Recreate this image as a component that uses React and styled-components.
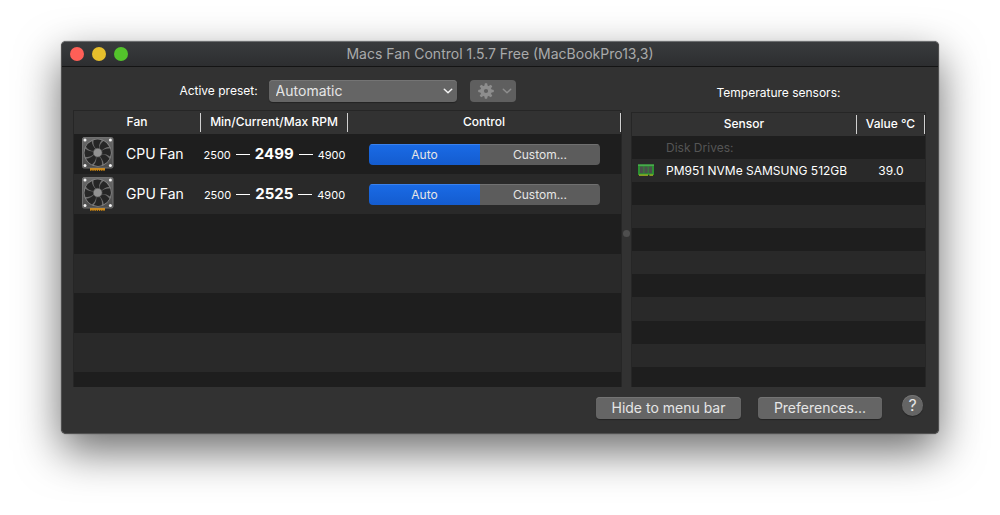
import React, { useState } from "react";
import styled, { createGlobalStyle, css } from "styled-components";

const GlobalStyle = createGlobalStyle`
	* {
		box-sizing: border-box;
	}
	body {
		margin: 0;
		background: #ffffff;
		color: #ffffff;
		font-family: Inter, "Liberation Sans", sans-serif;
		font-size: 12px;
		line-height: 16px;
	}
	button,
	select {
		font-family: inherit;
		margin: 0;
	}
`;

const Desktop = styled.div`
	padding: 41px 61px 81px;
`;

const Window = styled.main`
	border-radius: 5px;
	background: #323232;
	overflow: hidden;
	border: 1px solid #505050;
	border-top-color: #6c6e70;
	box-shadow: 0 0 1px rgba(0, 0, 0, 0.7), 0 17px 44px rgba(0, 0, 0, 0.58);
`;

const TitleBar = styled.header`
	display: grid;
	grid-template-columns: 1fr auto 1fr;
	align-items: center;
	height: 25px;
	padding: 0 8px;
	background: linear-gradient(#393b3d, #2d2e30);
	border-bottom: 1px solid #141414;
`;

const Title = styled.h1`
	margin: 0;
	font-size: 14px;
	font-weight: 400;
	color: #a9aaab;
`;

const Lights = styled.div`
	display: flex;
	gap: 8px;
`;

const Light = styled.button`
	width: 14px;
	height: 14px;
	padding: 0;
	border: 0;
	border-radius: 50%;
	background: ${(props) => props.$color};
`;

const Panels = styled.div`
	display: flex;
	min-height: 320px;
	padding: 0 12px 0 11px;
`;

const Panel = styled.section`
	display: flex;
	flex-direction: column;
	flex: ${(props) => props.$grow} 1 0;
	min-width: 0;
`;

const Toolbar = styled.div`
	display: flex;
	align-items: center;
	justify-content: center;
	height: ${(props) => props.$height};
	padding-top: ${(props) => props.$top};
`;

const PresetLabel = styled.label`
	margin-right: 11px;
`;

const PresetBox = styled.div`
	position: relative;
	width: 188px;
	margin-right: 13px;
	svg {
		position: absolute;
		right: 4px;
		top: 7px;
		pointer-events: none;
	}
`;

const raised = css`
	border: 0;
	border-radius: 4px;
	background: #656565;
	box-shadow: inset 0 1px 0 #747474, 0 1px 1px rgba(0, 0, 0, 0.3);
	color: #e6e6e6;
	font-size: 14px;
	line-height: 22px;
`;

const PresetSelect = styled.select`
	${raised}
	appearance: none;
	display: block;
	width: 100%;
	height: 22px;
	padding: 0 7px;
`;

const GearButton = styled.button`
	${raised}
	display: flex;
	align-items: center;
	justify-content: space-between;
	width: 46px;
	height: 22px;
	padding: 0 4px 0 8px;
	background: #5f5f5f;
	box-shadow: none;
`;

const Listing = styled.div`
	display: flex;
	flex-direction: column;
	flex: 1;
	border: 1px solid #262626;
	border-bottom: 0;
	overflow: hidden;
`;

const Table = styled.table`
	width: 100%;
	table-layout: fixed;
	border-collapse: collapse;
	td,
	th {
		padding: 0;
	}
`;

const HeadCell = styled.th`
	width: ${(props) => props.$width};
	height: 23px;
	font-weight: 500;
	vertical-align: top;
	span {
		display: block;
		height: 19px;
		margin-top: 2px;
		line-height: 18px;
		border-right: 1px solid #d0d0d0;
	}
`;

const Row = styled.tr`
	height: ${(props) => props.$height};
	background: ${(props) => (props.$light ? "#292929" : "#1e1e1e")};
`;

const Filler = styled.div`
	display: flex;
	flex-direction: column;
	flex: 1;
`;

const Stripe = styled.div`
	flex: ${(props) => props.$grow} 1 0;
	background: ${(props) => (props.$light ? "#292929" : "#1e1e1e")};
`;

const FanName = styled.div`
	display: flex;
	align-items: center;
	gap: 12px;
	padding-left: 8px;
	font-size: 14px;
`;

const Rpm = styled.div`
	display: flex;
	align-items: baseline;
	justify-content: center;
	gap: 5px;
	font-size: 11px;
	strong {
		font-size: 15px;
		font-weight: 700;
	}
	i {
		width: 14px;
		height: 1px;
		background: #ffffff;
		align-self: center;
	}
`;

const Segments = styled.div`
	display: flex;
	width: 231px;
	margin-left: 21px;
	border-radius: 4px;
	overflow: hidden;
`;

const Segment = styled.button`
	flex: ${(props) => props.$grow} 1 0;
	height: 21px;
	padding: 0;
	border: 0;
	font-size: 12px;
	color: #e6e6e6;
	background: ${(props) =>
		props.$active ? "linear-gradient(#1a6be6, #145ccf)" : "#5c5c5c"};
	box-shadow: inset 0 1px 0 ${(props) => (props.$active ? "#3a82ee" : "#707070")};
`;

const Splitter = styled.div`
	display: flex;
	width: 9px;
	justify-content: center;
	padding-top: 163px;
	&::after {
		content: "";
		width: 7px;
		height: 7px;
		border-radius: 50%;
		background: #4e4e4e;
	}
`;

const SensorName = styled.div`
	display: flex;
	align-items: center;
	padding-left: 34px;
	white-space: nowrap;
	color: ${(props) => (props.$group ? "#555555" : "#ffffff")};
	svg {
		margin: 0 12px 0 -28px;
	}
`;

const Value = styled.td`
	text-align: center;
`;

const Footer = styled.footer`
	display: flex;
	justify-content: flex-end;
	gap: 17px;
	padding: 10px 15px 14px;
`;

const FooterButton = styled.button`
	${raised}
	width: ${(props) => props.$width};
	height: 22px;
	padding: 0;
`;

const HelpButton = styled(FooterButton)`
	height: 21px;
	margin: -2px 0 0 3px;
	border-radius: 50%;
	font-size: 16px;
	line-height: 21px;
`;

const Chevron = ({ color }) => (
	<svg width="10" height="8" viewBox="0 0 10 8" fill="none" aria-hidden="true">
		<path d="M1.3 2.3 5 5.8l3.7-3.5" stroke={color} strokeWidth="1.5" strokeLinecap="round" strokeLinejoin="round" />
	</svg>
);

const Gear = () => (
	<svg width="16" height="16" viewBox="-8 -8 16 16" aria-hidden="true">
		{[0, 45, 90, 135].map((a) => (
			<path key={a} d="M-1.7 -5 -1.1 -7.8H1.1L1.7 -5V5L1.1 7.8H-1.1L-1.7 5Z" fill="#8d8d8d" transform={`rotate(${a})`} />
		))}
		<circle r="4.3" fill="none" stroke="#8d8d8d" strokeWidth="2.6" />
		<circle r="2.1" fill="#5f5f5f" />
	</svg>
);

const FanIcon = () => (
	<svg width="32" height="34" viewBox="0 0 32 34" aria-hidden="true">
		<defs>
			<linearGradient id="case" x1="0" y1="0" x2="0" y2="1">
				<stop offset="0" stopColor="#6a6a6a" />
				<stop offset="1" stopColor="#4c4c4c" />
			</linearGradient>
		</defs>
		<rect x="0.5" y="0.5" width="30.5" height="30.5" rx="1.5" fill="url(#case)" stroke="#707070" />
		<circle cx="15.7" cy="15.7" r="13.6" fill="#6d6d6d" stroke="#8c8c8c" strokeWidth="0.7" />
		{[0, 45, 90, 135, 180, 225, 270, 315].map((a) => (
			<path
				key={a}
				d="M14.3 12C11.6 9.4 11 6 11.6 3.2Q15.6 1.8 19.6 3.3C17.4 6 16.8 9 17 12Z"
				fill="#262626"
				transform={`rotate(${a} 15.7 15.7)`}
			/>
		))}
		<circle cx="15.7" cy="15.7" r="4.4" fill="#929292" stroke="#555555" strokeWidth="0.7" />
		{[[3, 3], [28.4, 3], [3, 28.4], [28.4, 28.4]].map(([x, y]) => (
			<circle key={`${x}-${y}`} cx={x} cy={y} r="1.5" fill="#f2f2f2" />
		))}
		<path d="M8 32H23" stroke="#f0a01c" strokeWidth="1.4" />
		<path d="M8.8 32.4v1.4M11 32.4v1.4M13.2 32.4v1.4M15.4 32.4v1.4M17.6 32.4v1.4M19.8 32.4v1.4M22 32.4v1.4" stroke="#e8960f" strokeWidth="1.3" />
	</svg>
);

const DriveIcon = () => (
	<svg width="16" height="13" viewBox="0 0 16 13" aria-hidden="true">
		<path d="M0 0.5H16V11H0Z" fill="#2c8f32" />
		<path d="M0 0.5H16V1.8H0Z" fill="#4fb453" />
		<path d="M2 2.6h3.4v6.6H2zM6.3 2.6h3.4v6.6H6.3zM10.6 2.6H14v6.6h-3.4z" fill="#4a504b" />
		<path d="M1 11.2h9M11.4 11.2H15" stroke="#a9bd1f" strokeWidth="1.3" />
	</svg>
);

const fans = [
	{ name: "CPU Fan", min: 2500, current: 2499, max: 4900 },
	{ name: "GPU Fan", min: 2500, current: 2525, max: 4900 },
];

const modes = [
	{ name: "Auto", grow: 111 },
	{ name: "Custom...", grow: 120 },
];

const FanRow = ({ fan, light }) => {
	const [mode, setMode] = useState("Auto");
	return (
		<Row $height='40px' $light={light}>
			<td>
				<FanName>
					<FanIcon />
					{fan.name}
				</FanName>
			</td>
			<td>
				<Rpm>
					{fan.min}
					<i />
					<strong>{fan.current}</strong>
					<i />
					{fan.max}
				</Rpm>
			</td>
			<td>
				<Segments role='group' aria-label={`${fan.name} control`}>
					{modes.map(({ name, grow }) => (
						<Segment
							key={name}
							$grow={grow}
							$active={mode === name}
							aria-pressed={mode === name}
							onClick={() => setMode(name)}
						>
							{name}
						</Segment>
					))}
				</Segments>
			</td>
		</Row>
	);
};

const App = () => {
	return (
		<>
			<GlobalStyle />
			<Desktop>
				<Window>
					<TitleBar>
						<Lights>
							<Light $color='#ff5f57' aria-label='Close' />
							<Light $color='#e6bf2c' aria-label='Minimize' />
							<Light $color='#53c22b' aria-label='Zoom' />
						</Lights>
						<Title>Macs Fan Control 1.5.7 Free (MacBookPro13,3)</Title>
					</TitleBar>
					<Panels>
						<Panel $grow={549}>
							<Toolbar $height='43px' $top='4px'>
								<PresetLabel htmlFor='preset'>Active preset:</PresetLabel>
								<PresetBox>
									<PresetSelect id='preset'>
										<option>Automatic</option>
									</PresetSelect>
									<Chevron color='#f2f2f2' />
								</PresetBox>
								<GearButton aria-label='Preset options' disabled>
									<Gear />
									<Chevron color='#8d8d8d' />
								</GearButton>
							</Toolbar>
							<Listing>
								<Table>
									<thead>
										<tr>
											<HeadCell $width='127px'><span>Fan</span></HeadCell>
											<HeadCell $width='147px'><span>Min/Current/Max RPM</span></HeadCell>
											<HeadCell><span>Control</span></HeadCell>
										</tr>
									</thead>
									<tbody>
										{fans.map((fan, i) => (
											<FanRow key={fan.name} fan={fan} light={i % 2 === 1} />
										))}
									</tbody>
								</Table>
								<Filler>
									{[8, 8, 8, 8, 3].map((grow, i) => (
										<Stripe key={i} $grow={grow} $light={i % 2 === 1} />
									))}
								</Filler>
							</Listing>
						</Panel>
						<Splitter />
						<Panel $grow={295}>
							<Toolbar $height='45px' $top='6px'>Temperature sensors:</Toolbar>
							<Listing>
								<Table>
									<thead>
										<tr>
											<HeadCell><span>Sensor</span></HeadCell>
											<HeadCell $width='68px'><span>Value °C</span></HeadCell>
										</tr>
									</thead>
									<tbody>
										<Row $height='23px'>
											<td><SensorName $group>Disk Drives:</SensorName></td>
											<td />
										</Row>
										<Row $height='23px' $light>
											<td>
												<SensorName>
													<DriveIcon />
													PM951 NVMe SAMSUNG 512GB
												</SensorName>
											</td>
											<Value>39.0</Value>
										</Row>
									</tbody>
								</Table>
								<Filler>
									{[8, 8, 8, 8, 8, 8, 8, 8, 7].map((grow, i) => (
										<Stripe key={i} $grow={grow} $light={i % 2 === 1} />
									))}
								</Filler>
							</Listing>
						</Panel>
					</Panels>
					<Footer>
						<FooterButton $width='145px'>Hide to menu bar</FooterButton>
						<FooterButton $width='124px'>Preferences...</FooterButton>
						<HelpButton $width='21px' aria-label='Help'>?</HelpButton>
					</Footer>
				</Window>
			</Desktop>
		</>
	);
};

export default App;
